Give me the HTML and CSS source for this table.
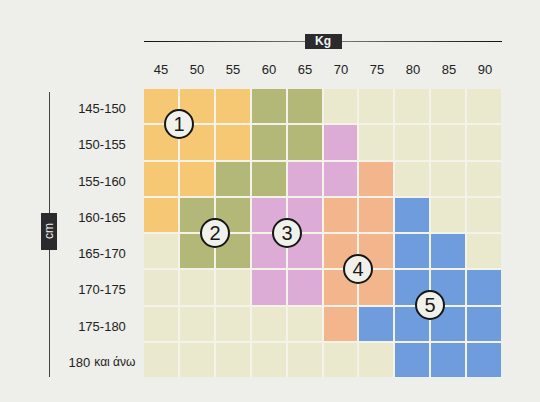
FILE: index.html
```html
<!DOCTYPE html>
<html lang="el">

<head>
  <meta charset="UTF-8">
  <meta name="viewport" content="width=device-width, initial-scale=1.0">
  <title>Πίνακας μεγεθών</title>
  <link rel="stylesheet" href="styles.css">
</head>

<body>

  <div class="chart">
    <!-- κιλά -->
    <div class="kg-head">
      <div class="kg-axis">
        <span class="rule rule-left"></span>
        <span class="kg">Kg</span>
        <span class="rule rule-right"></span>
      </div>
      <div class="kg-scale">
        <span>45</span><span>50</span><span>55</span><span>60</span><span>65</span>
        <span>70</span><span>75</span><span>80</span><span>85</span><span>90</span>
      </div>
    </div>

    <div class="main">
      <!-- εκατοστά -->
      <div class="cm-axis">
        <span class="vrule vrule-top"></span>
        <span class="cm">cm</span>
        <span class="vrule"></span>
      </div>
      <div class="heights">
        <span>145-150</span>
        <span>150-155</span>
        <span>155-160</span>
        <span>160-165</span>
        <span>165-170</span>
        <span>170-175</span>
        <span>175-180</span>
        <span>180 <small>και άνω</small></span>
      </div>

      <div class="grid">
        <!-- 145-150 -->
        <div class="y"></div><div class="y"></div><div class="y"></div><div class="g"></div><div class="g"></div>
        <div class="e"></div><div class="e"></div><div class="e"></div><div class="e"></div><div class="e"></div>
        <!-- 150-155 -->
        <div class="y"></div><div class="y"></div><div class="y"></div><div class="g"></div><div class="g"></div>
        <div class="p"></div><div class="e"></div><div class="e"></div><div class="e"></div><div class="e"></div>
        <!-- 155-160 -->
        <div class="y"></div><div class="y"></div><div class="g"></div><div class="g"></div><div class="p"></div>
        <div class="p"></div><div class="o"></div><div class="e"></div><div class="e"></div><div class="e"></div>
        <!-- 160-165 -->
        <div class="y"></div><div class="g"></div><div class="g"></div><div class="p"></div><div class="p"></div>
        <div class="o"></div><div class="o"></div><div class="b"></div><div class="e"></div><div class="e"></div>
        <!-- 165-170 -->
        <div class="e"></div><div class="g"></div><div class="g"></div><div class="p"></div><div class="p"></div>
        <div class="o"></div><div class="o"></div><div class="b"></div><div class="b"></div><div class="e"></div>
        <!-- 170-175 -->
        <div class="e"></div><div class="e"></div><div class="e"></div><div class="p"></div><div class="p"></div>
        <div class="o"></div><div class="o"></div><div class="b"></div><div class="b"></div><div class="b"></div>
        <!-- 175-180 -->
        <div class="e"></div><div class="e"></div><div class="e"></div><div class="e"></div><div class="e"></div>
        <div class="o"></div><div class="b"></div><div class="b"></div><div class="b"></div><div class="b"></div>
        <!-- 180 και άνω -->
        <div class="e"></div><div class="e"></div><div class="e"></div><div class="e"></div><div class="e"></div>
        <div class="e"></div><div class="e"></div><div class="b"></div><div class="b"></div><div class="b"></div>

        <span class="mark m1">1</span>
        <span class="mark m2">2</span>
        <span class="mark m3">3</span>
        <span class="mark m4">4</span>
        <span class="mark m5">5</span>
      </div>
    </div>
  </div>

</body>

</html>
```

FILE: styles.css
```css
* {
  padding: 0;
  margin: 0;
  box-sizing: border-box;
}

body {
  background-color: #eeeeea;
  font-family: "Liberation Sans", Arial, sans-serif;
  color: #222;
}

.chart {
  padding-top: 34px;
}

/* κιλά */
.kg-head {
  margin-left: 144px;
  width: 358px;
}

.kg-axis {
  display: flex;
  align-items: center;
  height: 14px;
}

.rule {
  flex: 1;
  height: 1px;
}

.rule-left {
  background: linear-gradient(to right, #111, #777);
}

.rule-right {
  background: linear-gradient(to right, #777, #111);
}

.kg {
  width: 37px;
  height: 15px;
  line-height: 15px;
  text-align: center;
  font-size: 12px;
  font-weight: 700;
  color: #f2f2f2;
  background-color: #2b2b2e;
}

.kg-scale {
  display: grid;
  grid-template-columns: repeat(10, 1fr);
  column-gap: 2px;
  margin-top: 14px;
  line-height: 16px;
  font-size: 13px;
  text-align: center;
}

/* κύριο μέρος */
.main {
  display: flex;
  margin-top: 11px;
}

.cm-axis {
  display: flex;
  flex-direction: column;
  align-items: center;
  width: 16px;
  margin-left: 41px;
  padding-top: 3px;
}

.vrule {
  flex: 1;
  width: 1px;
  background-color: #444;
}

.vrule-top {
  flex: none;
  height: 121px;
}

.cm {
  width: 16px;
  height: 37px;
  line-height: 16px;
  text-align: center;
  font-size: 12px;
  color: #eee;
  background-color: #2b2b2e;
  writing-mode: vertical-rl;
  transform: rotate(180deg);
}

.heights {
  display: grid;
  grid-template-rows: repeat(8, 1fr);
  row-gap: 2px;
  width: 80px;
  margin-left: 5px;
  font-size: 13px;
}

.heights span {
  display: flex;
  align-items: center;
  justify-content: center;
  padding-top: 5px;
}

.heights small {
  margin-left: 4px;
  font-size: 12px;
}

.grid {
  position: relative;
  display: grid;
  grid-template-columns: repeat(10, 1fr);
  grid-template-rows: repeat(8, 1fr);
  gap: 2px;
  width: 357px;
  height: 288px;
  margin-left: 2px;
  background-color: #f4f3ea;
}

.y {
  background-color: #f6c874;
}

.g {
  background-color: #b3b878;
}

.p {
  background-color: #dcabd6;
}

.o {
  background-color: #f3b68c;
}

.b {
  background-color: #6f9cdc;
}

.e {
  background-color: #ebe9cd;
}

/* αριθμοί ζωνών */
.mark {
  position: absolute;
  width: 30px;
  height: 30px;
  border: 2px solid #161616;
  border-radius: 50%;
  line-height: 26px;
  text-align: center;
  font-size: 20px;
  color: #1a1a1a;
  background-color: #f1f1ec;
  transform: translate(-50%, -50%);
}

.m1 {
  left: 35px;
  top: 35px;
}

.m2 {
  left: 71px;
  top: 144px;
}

.m3 {
  left: 143px;
  top: 144px;
}

.m4 {
  left: 214px;
  top: 180px;
}

.m5 {
  left: 286px;
  top: 216px;
}
```
